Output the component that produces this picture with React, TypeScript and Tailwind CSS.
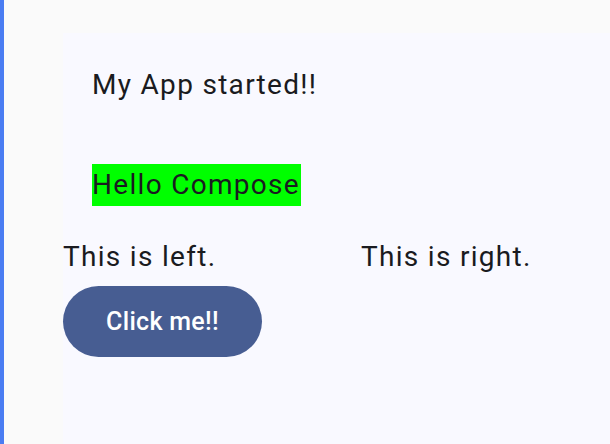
export default function App() {
  return (
    <div className="w-[610px] h-[444px] flex bg-[#fafafa] overflow-hidden font-['Roboto',sans-serif] text-[#1a1b20]">
      <div className="w-[4px] shrink-0 bg-[#4a7cf2]" />
      <div className="flex-1 pl-[59px] pt-[33px] flex">
        <div className="flex-1 bg-[#f9f9ff] flex flex-col text-[28px] leading-[42px] tracking-[1.3px]">
          <div className="pl-[29px] pt-[31px]">My App started!!</div>
          <div className="pl-[29px] pt-[58px]">
            <span className="bg-[#00ff00] inline-block pr-[1px]">Hello Compose</span>
          </div>
          <div className="flex pt-[30px]">
            <span className="w-[298px]">This is left.</span>
            <span>This is right.</span>
          </div>
          <div className="pt-[8px]">
            <button className="h-[71px] w-[199px] rounded-full bg-[#475d92] text-white text-[25px] font-medium tracking-[0.3px] leading-none">
              Click me!!
            </button>
          </div>
        </div>
      </div>
    </div>
  );
}
